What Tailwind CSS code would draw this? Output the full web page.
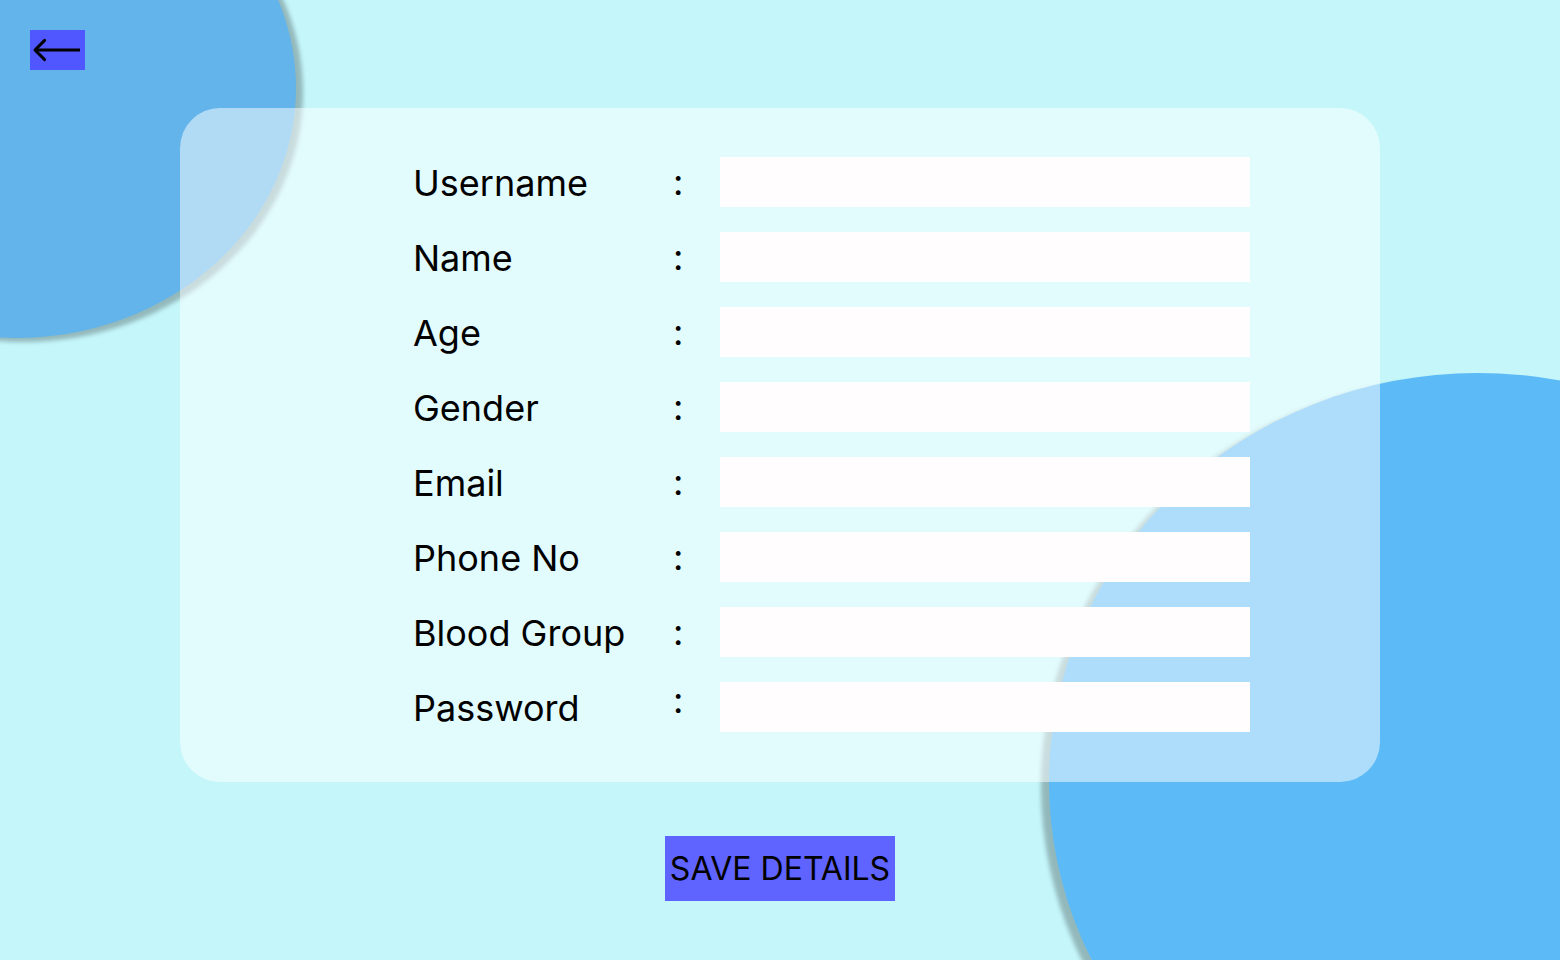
<!DOCTYPE html>
<html lang="en">
<head>
<meta charset="utf-8">
<meta name="viewport" content="width=device-width, initial-scale=1">
<title>Edit details</title>
<script src="https://cdn.jsdelivr.net/npm/@tailwindcss/browser@4"></script>
</head>
<body class="bg-[#c4f6fa] text-black font-['Inter',sans-serif] antialiased">
<div class="relative isolate min-h-screen overflow-hidden px-[30px] pt-[30px] pb-[59px]">
  <!-- Background ellipses -->
  <div class="absolute -z-10 -left-[264px] -top-[162px] h-[500px] w-[560px] rounded-[50%] bg-[#62b4ea] shadow-[7px_4px_4px_rgb(0_0_0/0.25)]"></div>
  <div class="absolute -z-10 -right-[347px] top-[373px] h-[818px] w-[858px] rounded-[50%] bg-[#5cbaf6] shadow-[-8px_4px_4px_rgb(0_0_0/0.25)]"></div>

  <header>
    <button type="button" aria-label="Back" class="block h-10 w-[55px] bg-[#5157ff]">
      <svg class="block h-10 w-[55px]" viewBox="0 0 55 40" fill="none" stroke="#000" stroke-width="3" aria-hidden="true">
        <path d="M50 20H5"/>
        <path d="M14.6 10.4L5 20L14.6 29.6" stroke-linecap="round" stroke-linejoin="round"/>
      </svg>
    </button>
  </header>

  <main>
    <form class="flex flex-col items-center gap-[54px] pt-[38px]">
      <div class="flex w-full max-w-[1200px] flex-col gap-[25px] rounded-[40px] bg-white/50 pt-[49px] pr-[130px] pb-[50px] pl-[233px] text-4xl">
        <div class="flex h-[50px] items-start"><label for="username" class="w-[260px] leading-[52px]">Username</label><span class="w-[47px] leading-[50px]">:</span><input id="username" type="text" class="h-full min-w-0 flex-1 bg-[#fffdfe] px-3 outline-none"></div>
        <div class="flex h-[50px] items-start"><label for="name" class="w-[260px] leading-[52px]">Name</label><span class="w-[47px] leading-[50px]">:</span><input id="name" type="text" class="h-full min-w-0 flex-1 bg-[#fffdfe] px-3 outline-none"></div>
        <div class="flex h-[50px] items-start"><label for="age" class="w-[260px] leading-[52px]">Age</label><span class="w-[47px] leading-[50px]">:</span><input id="age" type="text" class="h-full min-w-0 flex-1 bg-[#fffdfe] px-3 outline-none"></div>
        <div class="flex h-[50px] items-start"><label for="gender" class="w-[260px] leading-[52px]">Gender</label><span class="w-[47px] leading-[50px]">:</span><input id="gender" type="text" class="h-full min-w-0 flex-1 bg-[#fffdfe] px-3 outline-none"></div>
        <div class="flex h-[50px] items-start"><label for="email" class="w-[260px] leading-[52px]">Email</label><span class="w-[47px] leading-[50px]">:</span><input id="email" type="email" class="h-full min-w-0 flex-1 bg-[#fffdfe] px-3 outline-none"></div>
        <div class="flex h-[50px] items-start"><label for="phone" class="w-[260px] leading-[52px]">Phone No</label><span class="w-[47px] leading-[50px]">:</span><input id="phone" type="tel" class="h-full min-w-0 flex-1 bg-[#fffdfe] px-3 outline-none"></div>
        <div class="flex h-[50px] items-start"><label for="blood" class="w-[260px] leading-[52px]">Blood Group</label><span class="w-[47px] leading-[50px]">:</span><input id="blood" type="text" class="h-full min-w-0 flex-1 bg-[#fffdfe] px-3 outline-none"></div>
        <div class="flex h-[50px] items-start"><label for="password" class="w-[260px] leading-[52px]">Password</label><span class="w-[47px] leading-9">:</span><input id="password" type="password" class="h-full min-w-0 flex-1 bg-[#fffdfe] px-3 outline-none"></div>
      </div>
      <button type="submit" class="h-[65px] w-[230px] whitespace-nowrap bg-[#5f63ff] text-[32px]">SAVE DETAILS</button>
    </form>
  </main>
</div>
</body>
</html>
